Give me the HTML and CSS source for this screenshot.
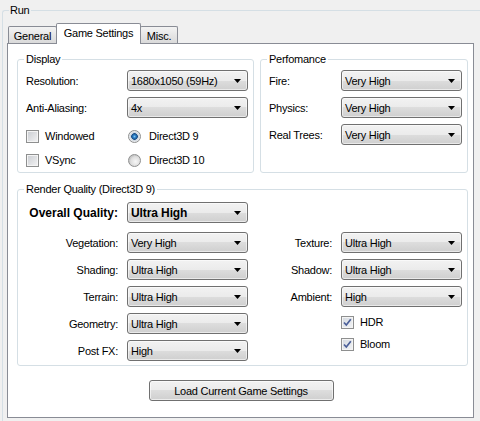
FILE: index.html
```html
<!DOCTYPE html>
<html>
<head>
<meta charset="utf-8">
<link rel="stylesheet" href="styles.css">
</head>
<body>
<fieldset class="run">
  <legend class="run-legend">Run</legend>
  <div class="tabs">
    <div class="tab tab-general">General</div>
    <div class="tab tab-active">Game Settings</div>
    <div class="tab tab-misc">Misc.</div>
  </div>
  <div class="panel">
    <div class="top-groups">
      <fieldset class="group group-display">
        <legend class="group-legend">Display</legend>
        <div class="form-grid display-grid">
          <span class="lbl">Resolution:</span>
          <div class="combo"><span class="combo-text">1680x1050 (59Hz)</span><svg class="arrow" width="7" height="4" viewBox="0 0 7 4"><polygon points="0,0 7,0 3.5,4"/></svg></div>
          <span class="lbl">Anti-Aliasing:</span>
          <div class="combo"><span class="combo-text">4x</span><svg class="arrow" width="7" height="4" viewBox="0 0 7 4"><polygon points="0,0 7,0 3.5,4"/></svg></div>
        </div>
        <div class="opts">
          <div class="check"><span class="box"></span><span>Windowed</span></div>
          <div class="check radio-opt"><span class="radio radio-on"></span><span>Direct3D 9</span></div>
          <div class="check"><span class="box"></span><span>VSync</span></div>
          <div class="check radio-opt"><span class="radio"></span><span>Direct3D 10</span></div>
        </div>
      </fieldset>
      <fieldset class="group group-perf">
        <legend class="group-legend">Perfomance</legend>
        <div class="form-grid perf-grid">
          <span class="lbl">Fire:</span>
          <div class="combo"><span class="combo-text">Very High</span><svg class="arrow" width="7" height="4" viewBox="0 0 7 4"><polygon points="0,0 7,0 3.5,4"/></svg></div>
          <span class="lbl">Physics:</span>
          <div class="combo"><span class="combo-text">Very High</span><svg class="arrow" width="7" height="4" viewBox="0 0 7 4"><polygon points="0,0 7,0 3.5,4"/></svg></div>
          <span class="lbl">Real Trees:</span>
          <div class="combo"><span class="combo-text">Very High</span><svg class="arrow" width="7" height="4" viewBox="0 0 7 4"><polygon points="0,0 7,0 3.5,4"/></svg></div>
        </div>
      </fieldset>
    </div>
    <fieldset class="group group-render">
      <legend class="group-legend">Render Quality (Direct3D 9)</legend>
      <div class="form-grid left-grid overall">
        <span class="lbl lbl-right lbl-bold">Overall Quality:</span>
        <div class="combo combo-bold"><span class="combo-text">Ultra High</span><svg class="arrow" width="7" height="4" viewBox="0 0 7 4"><polygon points="0,0 7,0 3.5,4"/></svg></div>
      </div>
      <div class="cols">
        <div class="form-grid left-grid">
          <span class="lbl lbl-right">Vegetation:</span>
          <div class="combo"><span class="combo-text">Very High</span><svg class="arrow" width="7" height="4" viewBox="0 0 7 4"><polygon points="0,0 7,0 3.5,4"/></svg></div>
          <span class="lbl lbl-right">Shading:</span>
          <div class="combo"><span class="combo-text">Ultra High</span><svg class="arrow" width="7" height="4" viewBox="0 0 7 4"><polygon points="0,0 7,0 3.5,4"/></svg></div>
          <span class="lbl lbl-right">Terrain:</span>
          <div class="combo"><span class="combo-text">Ultra High</span><svg class="arrow" width="7" height="4" viewBox="0 0 7 4"><polygon points="0,0 7,0 3.5,4"/></svg></div>
          <span class="lbl lbl-right">Geometry:</span>
          <div class="combo"><span class="combo-text">Ultra High</span><svg class="arrow" width="7" height="4" viewBox="0 0 7 4"><polygon points="0,0 7,0 3.5,4"/></svg></div>
          <span class="lbl lbl-right">Post FX:</span>
          <div class="combo"><span class="combo-text">High</span><svg class="arrow" width="7" height="4" viewBox="0 0 7 4"><polygon points="0,0 7,0 3.5,4"/></svg></div>
        </div>
        <div class="right-col">
          <div class="form-grid right-grid">
            <span class="lbl lbl-right">Texture:</span>
            <div class="combo"><span class="combo-text">Ultra High</span><svg class="arrow" width="7" height="4" viewBox="0 0 7 4"><polygon points="0,0 7,0 3.5,4"/></svg></div>
            <span class="lbl lbl-right">Shadow:</span>
            <div class="combo"><span class="combo-text">Ultra High</span><svg class="arrow" width="7" height="4" viewBox="0 0 7 4"><polygon points="0,0 7,0 3.5,4"/></svg></div>
            <span class="lbl lbl-right">Ambient:</span>
            <div class="combo"><span class="combo-text">High</span><svg class="arrow" width="7" height="4" viewBox="0 0 7 4"><polygon points="0,0 7,0 3.5,4"/></svg></div>
          </div>
          <div class="checks">
            <div class="check"><span class="box box-checked"><svg width="11" height="11" viewBox="0 0 11 11"><path d="M2 5.5 L4.3 8 L8.8 2.2" fill="none" stroke="#4b5f99" stroke-width="1.7"/></svg></span><span>HDR</span></div>
            <div class="check"><span class="box box-checked"><svg width="11" height="11" viewBox="0 0 11 11"><path d="M2 5.5 L4.3 8 L8.8 2.2" fill="none" stroke="#4b5f99" stroke-width="1.7"/></svg></span><span>Bloom</span></div>
          </div>
        </div>
      </div>
    </fieldset>
    <div class="actions">
      <button class="btn">Load Current Game Settings</button>
    </div>
  </div>
</fieldset>
</body>
</html>
```

FILE: styles.css
```css
* { box-sizing: border-box; }
html, body { margin: 0; height: 100%; }
body {
  background: #f0f0f0;
  overflow: hidden;
  font-family: "Liberation Sans", Arial, sans-serif;
  font-size: 11px;
  letter-spacing: -0.25px;
  color: #000;
}
.run {
  margin: 4px 0 0 2px;
  padding: 6px 0 0 4px;
  border: 1px solid #d5dfe5;
  border-right: 0;
  border-bottom: 0;
  border-radius: 3px 0 0 0;
  width: 478px;
  height: 417px;
  min-inline-size: 0;
}
.run-legend {
  margin-left: 2px;
  padding: 0 2px 0 1px;
  line-height: 13px;
  height: 13px;
}
.tabs {
  display: flex;
  align-items: flex-end;
  height: 20px;
  padding-left: 1px;
}
.tab {
  height: 17px;
  border: 1px solid #898c95;
  border-bottom: 0;
  border-radius: 2px 2px 0 0;
  background: linear-gradient(#f3f3f3, #e6e6e6 50%, #dadada);
  display: flex;
  align-items: center;
  justify-content: center;
  padding-top: 1px;
}
.tab-general { width: 49px; }
.tab-active {
  width: 85px;
  height: 21px;
  margin-left: -1px;
  margin-bottom: -1px;
  background: #fff;
  position: relative;
  z-index: 1;
  padding-top: 0;
  padding-bottom: 2px;
}
.tab-misc { width: 38px; margin-left: -1px; }
.panel {
  width: 467px;
  height: 375px;
  border: 1px solid #898c95;
  background: #fff;
  padding: 9px 5px 0 9px;
}
.top-groups {
  display: flex;
  gap: 6px;
  align-items: stretch;
}
.group {
  margin: 0;
  border: 1px solid #d5dfe5;
  border-radius: 3px;
  padding: 4px 5px 5px 8px;
  min-inline-size: 0;
}
.group-legend {
  margin-left: -2px;
  padding: 0 2px;
  line-height: 13px;
  height: 13px;
}
.group-display { width: 237px; }
.group-perf { width: 208px; }
.form-grid {
  display: grid;
  row-gap: 6px;
  align-items: center;
}
.display-grid { grid-template-columns: 101px 121px; }
.perf-grid { grid-template-columns: 72px 121px; }
.lbl { white-space: nowrap; }
.lbl-right { text-align: right; }
.lbl-bold { font-weight: bold; font-size: 12px; letter-spacing: 0; }
.combo {
  display: flex;
  align-items: center;
  height: 21px;
  width: 121px;
  border: 1px solid #707070;
  border-radius: 3px;
  padding-left: 3px;
  background: linear-gradient(#f2f2f2 0%, #ebebeb 50%, #dddddd 50%, #cfcfcf 100%);
  box-shadow: inset 0 0 0 1px rgba(255,255,255,0.55);
}
.combo-text { flex: 1; white-space: nowrap; }
.combo-bold .combo-text { font-weight: bold; font-size: 12px; letter-spacing: -0.1px; }
.arrow { flex: none; margin-right: 6px; fill: #000; }
.opts {
  display: grid;
  grid-template-columns: 102px 120px;
  row-gap: 11px;
  margin-top: 12px;
}
.check {
  display: flex;
  align-items: center;
  gap: 6px;
  height: 13px;
  line-height: 13px;
  white-space: nowrap;
}
.radio-opt { gap: 8px; }
.box {
  flex: none;
  width: 13px;
  height: 13px;
  border: 1px solid #8e8f8f;
  background: linear-gradient(135deg, #c9ccd1, #f3f3f4);
  box-shadow: inset 0 0 0 1px #f4f4f4;
  display: flex;
}
.box-checked {
  background: linear-gradient(135deg, #d3d8df, #f3f4f6);
}
.radio {
  flex: none;
  width: 13px;
  height: 13px;
  border-radius: 50%;
  border: 1px solid #8e8f8f;
  background: radial-gradient(circle at 60% 60%, #f7f7f7 0, #dcdcdc 5px, #c9c9c9 6px);
}
.radio-on {
  background: radial-gradient(circle at 50% 50%, #7cc4f4 0, #2b7dc4 1.5px, #1a4d86 3px, #c8d1db 3.6px, #eef0f2 5.5px);
}
.group-render {
  margin-top: 10px;
  width: 451px;
  padding: 6px 5px 4px 8px;
}
.left-grid {
  grid-template-columns: 92px 121px;
  column-gap: 9px;
}
.right-grid {
  grid-template-columns: 70px 121px;
  column-gap: 9px;
}
.cols {
  display: flex;
  justify-content: space-between;
  margin-top: 9px;
}
.right-col { display: flex; flex-direction: column; }
.checks {
  display: flex;
  flex-direction: column;
  gap: 9px;
  margin-top: 9px;
  margin-left: 79px;
}
.actions {
  display: flex;
  justify-content: center;
  margin-top: 14px;
  padding-right: 3px;
}
.btn {
  width: 185px;
  height: 21px;
  border: 1px solid #707070;
  border-radius: 3px;
  background: linear-gradient(#f2f2f2 0%, #ebebeb 50%, #dddddd 50%, #cfcfcf 100%);
  box-shadow: inset 0 0 0 1px rgba(255,255,255,0.6);
  font-family: inherit;
  font-size: 11px;
  letter-spacing: -0.25px;
  color: #000;
  padding: 0;
}
```
